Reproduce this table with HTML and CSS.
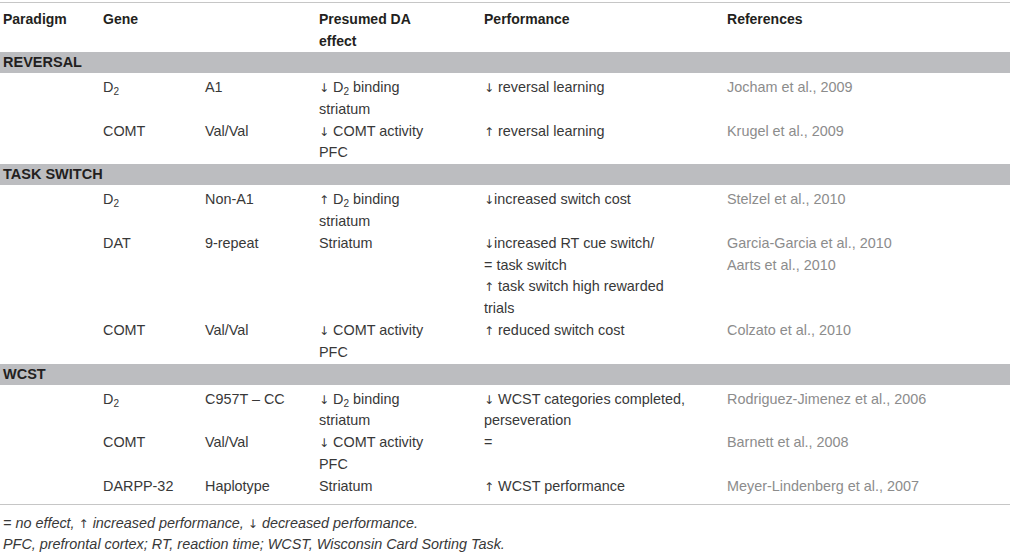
FILE: index.html
```html
<!DOCTYPE html>
<html lang="en">
<head>
    <meta charset="UTF-8">
    <title>dopamine genes and flexibility</title>
    <link rel="stylesheet" href="styles.css">
</head>
<body>
    <div class="wrapper">
        <table class="genes">
            <colgroup>
                <col class="c1"><col class="c2"><col class="c3"><col class="c4"><col class="c5"><col class="c6">
            </colgroup>
            <thead>
                <tr>
                    <th>Paradigm</th>
                    <th colspan="2">Gene</th>
                    <th>Presumed DA<br>effect</th>
                    <th>Performance</th>
                    <th>References</th>
                </tr>
            </thead>
            <tbody>
                <tr class="band"><td colspan="6">REVERSAL</td></tr>
                <tr class="first">
                    <td></td><td>D<sub>2</sub></td><td>A1</td>
                    <td><span class="arr">↓</span> D<sub>2</sub> binding<br>striatum</td>
                    <td><span class="arr">↓</span> reversal learning</td>
                    <td class="ref">Jocham et al., 2009</td>
                </tr>
                <tr>
                    <td></td><td>COMT</td><td>Val/Val</td>
                    <td><span class="arr">↓</span> COMT activity<br>PFC</td>
                    <td><span class="arr">↑</span> reversal learning</td>
                    <td class="ref">Krugel et al., 2009</td>
                </tr>

                <tr class="band"><td colspan="6">TASK SWITCH</td></tr>
                <tr class="first">
                    <td></td><td>D<sub>2</sub></td><td>Non-A1</td>
                    <td><span class="arr">↑</span> D<sub>2</sub> binding<br>striatum</td>
                    <td><span class="arr">↓</span>increased switch cost</td>
                    <td class="ref">Stelzel et al., 2010</td>
                </tr>
                <tr>
                    <td></td><td>DAT</td><td>9-repeat</td>
                    <td>Striatum</td>
                    <td><span class="arr">↓</span>increased RT cue switch/<br>= task switch<br><span class="arr">↑</span> task switch high rewarded<br>trials</td>
                    <td class="ref">Garcia-Garcia et al., 2010<br>Aarts et al., 2010</td>
                </tr>
                <tr>
                    <td></td><td>COMT</td><td>Val/Val</td>
                    <td><span class="arr">↓</span> COMT activity<br>PFC</td>
                    <td><span class="arr">↑</span> reduced switch cost</td>
                    <td class="ref">Colzato et al., 2010</td>
                </tr>

                <tr class="band"><td colspan="6">WCST</td></tr>
                <tr class="first">
                    <td></td><td>D<sub>2</sub></td><td>C957T – CC</td>
                    <td><span class="arr">↓</span> D<sub>2</sub> binding<br>striatum</td>
                    <td><span class="arr">↓</span> WCST categories completed,<br>perseveration</td>
                    <td class="ref">Rodriguez-Jimenez et al., 2006</td>
                </tr>
                <tr>
                    <td></td><td>COMT</td><td>Val/Val</td>
                    <td><span class="arr">↓</span> COMT activity<br>PFC</td>
                    <td>=</td>
                    <td class="ref">Barnett et al., 2008</td>
                </tr>
                <tr class="last">
                    <td></td><td>DARPP-32</td><td>Haplotype</td>
                    <td>Striatum</td>
                    <td><span class="arr">↑</span> WCST performance</td>
                    <td class="ref">Meyer-Lindenberg et al., 2007</td>
                </tr>
            </tbody>
        </table>
        <div class="notes">
            <p>= no effect, <span class="arr">↑</span> increased performance, <span class="arr">↓</span> decreased performance.</p>
            <p>PFC, prefrontal cortex; RT, reaction time; WCST, Wisconsin Card Sorting Task.</p>
        </div>
    </div>
</body>
</html>
```

FILE: styles.css
```css
body{
    margin: 0;
    background: #fff;
    font-family: "Liberation Sans", Arial, sans-serif;
    font-size: 14.4px;
    color: #383838;
}
.wrapper{
    width: 1010px;
    padding-top: 2px;
}
.genes{
    width: 1010px;
    border-collapse: collapse;
    table-layout: fixed;
    border-top: 1px solid #c6c6c6;
    border-bottom: 1px solid #c6c6c6;
}
.c1{ width: 100px; }
.c2{ width: 102px; }
.c3{ width: 114px; }
.c4{ width: 165px; }
.c5{ width: 243px; }
th, td{
    padding: 0 0 0 3px;
    text-align: left;
    vertical-align: top;
    line-height: 21.8px;
    white-space: nowrap;
}
th{
    font-weight: bold;
    font-size: 14px;
    line-height: 22px;
    color: #231f20;
    padding-top: 5px;
}
.band td{
    background: #bcbdc0;
    font-weight: bold;
    color: #231f20;
    line-height: 21px;
    font-size: 14.5px;
}
.first td{
    padding-top: 4px;
}
.last td{
    padding-bottom: 6px;
}
.ref{
    color: #8c8c8c;
}
sub{
    font-size: 10px;
    line-height: 0;
    vertical-align: -3px;
}
.arr{
    font-family: "DejaVu Sans", sans-serif;
    font-size: 12px;
    line-height: 0;
}
.notes{
    padding-top: 8px;
}
.notes p{
    margin: 0;
    font-style: italic;
    line-height: 21px;
    padding-left: 3px;
}
```
